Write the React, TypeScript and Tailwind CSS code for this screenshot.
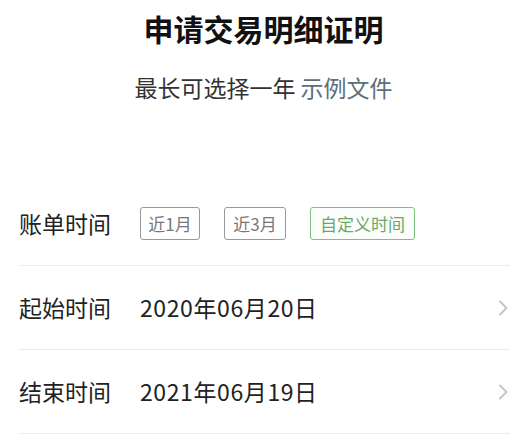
const font = { fontFamily: '"Noto Sans CJK SC", "Noto Sans", sans-serif' }

function Row({ label, children, arrow }: { label: string; children: React.ReactNode; arrow?: boolean }) {
  return (
    <div className="flex items-center h-[84px] border-b border-[#ebebeb]">
      <div className="w-[121px] text-[23px] text-[#222]">{label}</div>
      <div className="flex-1 flex items-center">{children}</div>
      {arrow && (
        <svg width="12" height="16" viewBox="0 0 12 16" className="mr-[1px]">
          <path d="M3 1.5 L9.5 8 L3 14.5" fill="none" stroke="#c6c6c6" strokeWidth="2" strokeLinecap="round" strokeLinejoin="round" />
        </svg>
      )}
    </div>
  )
}

export default function App() {
  return (
    <div className="w-[521px] h-[436px] bg-white overflow-hidden" style={font}>
      <div className="pt-[11px] pl-[6px] text-center text-[30px] leading-[34px] font-bold text-[#111]">
        申请交易明细证明
      </div>
      <div className="mt-[27px] pl-[6px] text-center text-[23px] leading-[30px] text-[#333]">
        最长可选择一年 <span className="text-[#5d6e7c]">示例文件</span>
      </div>
      <div className="mt-[80px] ml-[19px] mr-[11px]">
        <Row label="账单时间">
          <div className="flex items-center gap-[24px] text-[17px]">
            <span className="w-[60px] h-[33px] flex items-center justify-center border-[1.5px] border-[#999] rounded-[3px] text-[#777]">近1月</span>
            <span className="w-[62px] h-[33px] flex items-center justify-center border-[1.5px] border-[#999] rounded-[3px] text-[#777]">近3月</span>
            <span className="w-[105px] h-[33px] flex items-center justify-center border-[1.5px] border-[#80bf80] rounded-[3px] text-[#6aa86a] bg-[#fbfefb]">自定义时间</span>
          </div>
        </Row>
        <Row label="起始时间" arrow>
          <span className="text-[23px] tracking-[0.6px] text-[#222]">2020年06月20日</span>
        </Row>
        <Row label="结束时间" arrow>
          <span className="text-[23px] tracking-[0.6px] text-[#222]">2021年06月19日</span>
        </Row>
      </div>
    </div>
  )
}
